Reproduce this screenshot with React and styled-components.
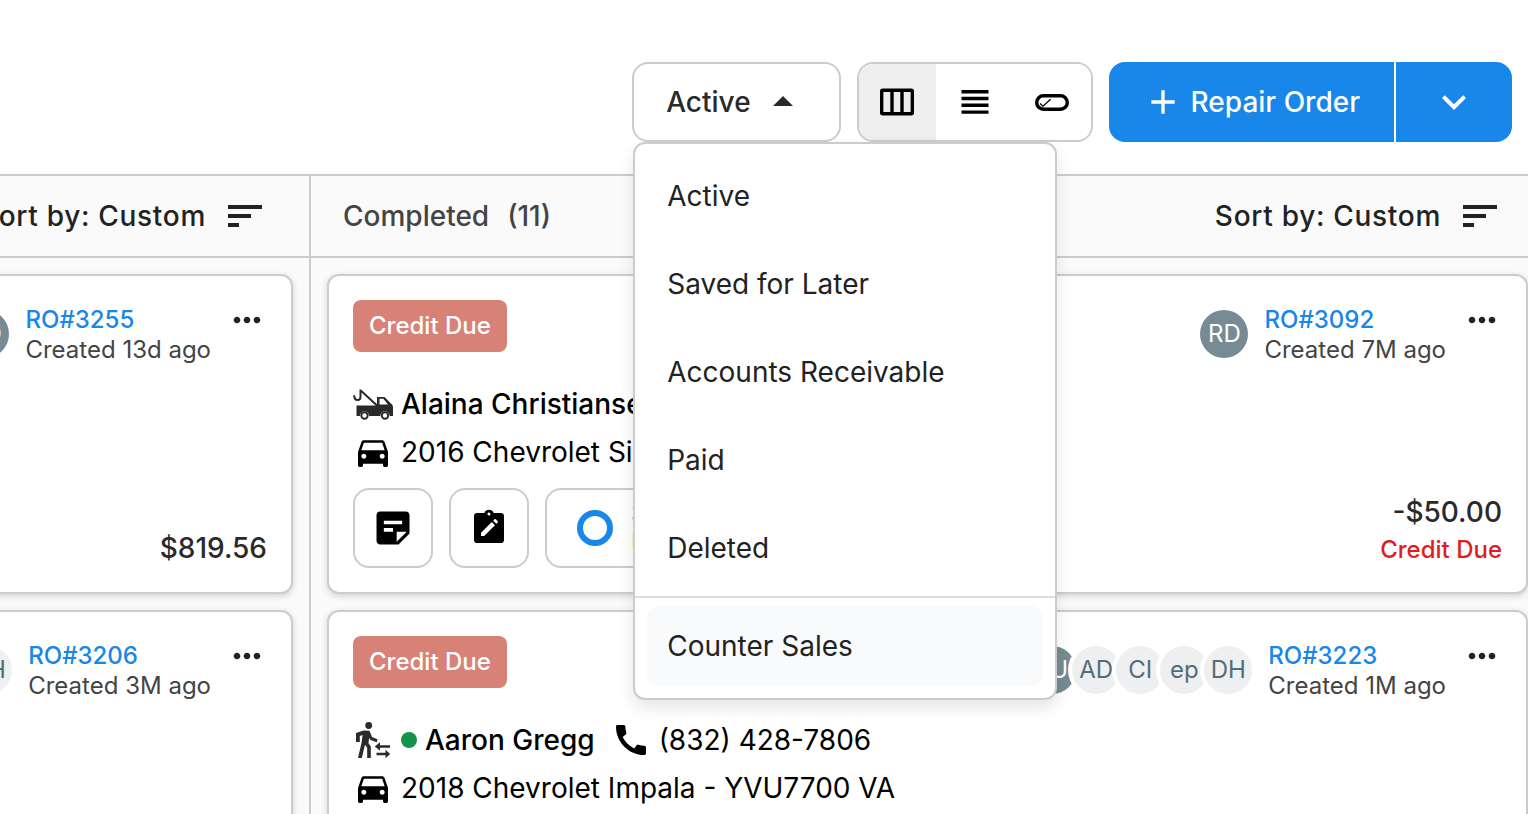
import React from 'react';
import styled, { createGlobalStyle, css } from 'styled-components';
import { MdAdd, MdArrowDropUp, MdCall, MdDirectionsCar, MdKeyboardArrowDown, MdMoreHoriz, MdStickyNote2 } from 'react-icons/md';

const line = '#cccccc';
const blue = '#1986e9';

const GlobalStyle = createGlobalStyle`
  *, *::before, *::after { box-sizing: border-box; }
  body {
    margin: 0;
    background: #fff;
    color: #000;
    font-family: Inter, "Liberation Sans", sans-serif;
    font-size: 28px;
    line-height: 40px;
    -webkit-font-smoothing: antialiased;
  }
  button { font: inherit; color: inherit; cursor: pointer; padding: 0; margin: 0; }
  svg { display: block; flex: none; }
`;

const Page = styled.div`
  display: flex;
  flex-direction: column;
  height: 100vh;
  overflow: hidden;
`;

const Toolbar = styled.header`
  display: flex;
  justify-content: flex-end;
  gap: 16px;
  padding: 62px 16px 32px;
`;

const FilterWrap = styled.div`
  position: relative;
`;

const FilterButton = styled.button`
  display: flex;
  align-items: center;
  gap: 8px;
  height: 80px;
  padding: 0 32px;
  background: #fff;
  border: 2px solid ${line};
  border-radius: 16px;
  color: #2a2a2a;
  font-weight: 500;
`;

const Menu = styled.div`
  position: absolute;
  z-index: 10;
  top: 100%;
  left: 1px;
  width: 424px;
  padding: 12px 0;
  background: #fff;
  border: 2px solid ${line};
  border-radius: 12px;
  box-shadow: 0 8px 16px rgba(0, 0, 0, 0.1);
`;

const MenuGroup = styled.div`
  display: flex;
  flex-direction: column;
  gap: 8px;
  padding: 0 12px;

  & + & {
    margin-top: 8px;
    padding-top: 8px;
    border-top: 2px solid #dddddd;
  }
`;

const MenuItem = styled.button`
  height: 80px;
  padding: 0 20px;
  text-align: left;
  border: 0;
  border-radius: 12px;
  background: ${({ $active }) => ($active ? '#f9fafc' : 'transparent')};
  color: #222222;
`;

const ViewToggle = styled.div`
  display: flex;
  width: 236px;
  height: 80px;
  overflow: hidden;
  border: 2px solid ${line};
  border-radius: 16px;
`;

const ViewButton = styled.button`
  flex: 1;
  display: flex;
  align-items: center;
  justify-content: center;
  border: 0;
  background: ${({ $selected }) => ($selected ? '#eeeeee' : '#fff')};
`;

const SplitButton = styled.div`
  display: flex;
  gap: 2px;
  height: 80px;
  overflow: hidden;
  border-radius: 16px;
`;

const PrimaryButton = styled.button`
  display: flex;
  align-items: center;
  gap: 8px;
  padding: 0 34px;
  border: 0;
  background: ${blue};
  color: #fff;
  font-weight: 500;
`;

const Board = styled.main`
  flex: 1;
  display: flex;
  min-height: 0;
  margin-right: -16px;
  border-top: 2px solid ${line};
  background: #fafafa;
`;

const Column = styled.section`
  display: flex;
  flex-direction: column;
  min-width: 0;
  ${({ $partial }) =>
    $partial
      ? css`
          flex: 0 0 311px;
          align-items: flex-end;
          border-right: 2px solid ${line};
          overflow: hidden;
        `
      : css`
          flex: 1;
          align-items: stretch;
        `}

  & > * { min-width: 640px; }
`;

const ColumnHeader = styled.div`
  display: flex;
  align-items: center;
  justify-content: space-between;
  height: 82px;
  flex: none;
  padding: 0 47px 0 32px;
  border-bottom: 2px solid ${line};
`;

const ColumnTitle = styled.h2`
  margin: 0;
  display: flex;
  gap: 18px;
  font-size: 28px;
  font-weight: 500;
  color: #444444;
`;

const SortButton = styled.button`
  display: flex;
  align-items: center;
  gap: 22px;
  border: 0;
  background: none;
  color: #222222;
  font-weight: 500;
  letter-spacing: 0.025em;
  white-space: nowrap;
`;

const CardList = styled.div`
  display: flex;
  flex-direction: column;
  gap: 16px;
  padding: 16px;
`;

const Card = styled.article`
  display: flex;
  justify-content: space-between;
  flex: none;
  height: 320px;
  padding: 24px;
  background: #fff;
  border: 2px solid ${line};
  border-radius: 12px;
  box-shadow: 0 2px 6px rgba(0, 0, 0, 0.16);
`;

const CardMain = styled.div`
  display: flex;
  flex-direction: column;
  align-items: flex-start;
`;

const CardSide = styled.div`
  display: flex;
  flex-direction: column;
  justify-content: space-between;
  align-items: flex-end;
`;

const Badge = styled.span`
  height: 52px;
  margin-bottom: 28px;
  padding: 0 16px;
  border-radius: 8px;
  background: #d88277;
  color: #fff;
  font-size: 24px;
  font-weight: 500;
  line-height: 52px;
`;

const InfoRow = styled.div`
  display: flex;
  align-items: center;
  gap: 8px;
  height: 48px;
  white-space: nowrap;
`;

const Customer = styled.span`
  font-weight: 500;
`;

const Phone = styled.span`
  display: flex;
  align-items: center;
  gap: 8px;
  margin-left: 8px;
`;

const StatusDot = styled.span`
  width: 16px;
  height: 16px;
  border-radius: 50%;
  background: #16934a;
`;

const Actions = styled.div`
  display: flex;
  gap: 16px;
  margin-top: 12px;
`;

const ActionButton = styled.button`
  display: flex;
  align-items: center;
  justify-content: center;
  gap: 18px;
  height: 80px;
  min-width: 80px;
  padding: ${({ $wide }) => ($wide ? '0 30px' : '0')};
  border: 2px solid ${line};
  border-radius: 16px;
  background: #fff;
`;

const Ring = styled.span`
  width: 36px;
  height: 36px;
  border: 6px solid ${blue};
  border-radius: 50%;
`;

const Progress = styled.span`
  display: flex;
  flex-direction: column;
  font-size: 24px;
  line-height: 28px;
  text-align: left;
  color: #444444;
`;

const OrderHead = styled.div`
  display: flex;
  align-items: flex-start;
  gap: 16px;
`;

const Avatars = styled.div`
  display: flex;
  padding-top: 10px;
`;

const Avatar = styled.span`
  width: 48px;
  height: 48px;
  border-radius: 50%;
  box-shadow: 0 0 0 4px #fff;
  background: ${({ $dark }) => ($dark ? '#768b93' : '#eeeff1')};
  color: ${({ $dark }) => ($dark ? '#fff' : '#536d78')};
  font-size: 24px;
  line-height: 48px;
  text-align: center;

  & + & { margin-left: -4px; }
`;

const OrderText = styled.div`
  display: flex;
  flex-direction: column;
  padding-top: 5px;
  font-size: 24px;
  line-height: 30px;
  white-space: nowrap;
  color: #444444;
`;

const OrderLink = styled.a`
  color: ${blue};
  font-weight: 500;
  text-decoration: none;
`;

const IconButton = styled.button`
  display: flex;
  border: 0;
  background: none;
  color: #222222;
`;

const Amount = styled.div`
  text-align: right;
  font-weight: 500;
  color: #2a2a2a;
`;

const AmountNote = styled.div`
  font-size: 24px;
  line-height: 36px;
  color: #e01e1e;
`;

const SortIcon = () => (
  <svg width="34" height="22" viewBox="0 0 34 22" fill="currentColor" aria-hidden="true">
    <path d="M0 0h34v4H0zM0 9h23v4H0zM0 18h11v4H0z" />
  </svg>
);

const ColumnsIcon = () => (
  <svg width="34" height="28" viewBox="0 0 34 28" fill="none" stroke="#000" strokeWidth="3.4" aria-hidden="true">
    <rect x="1.7" y="2.2" width="30.6" height="23.6" rx="1" />
    <path d="M12 1v26M22 1v26" />
  </svg>
);

const RowsIcon = () => (
  <svg width="28" height="24" viewBox="0 0 28 24" fill="#000" aria-hidden="true">
    <path d="M.5 0h27v3.4H.5zM.5 6.800h27v3.400H.5zM.5 13.600h27V17H.5zM.5 20.400h27v3.400H.5z" />
  </svg>
);

const PillIcon = () => (
  <svg width="34" height="17" viewBox="0 0 34 17" fill="none" stroke="#000" aria-hidden="true">
    <rect x="1.7" y="1.7" width="30.6" height="13.6" rx="6.8" strokeWidth="3.4" />
    <path d="M5 9.4l3 2.8 7.6-7" strokeWidth="1.3" />
  </svg>
);

const ClipboardIcon = () => (
  <svg width="40" height="40" viewBox="0 0 24 24" aria-hidden="true">
    <path d="M19 3h-4.2a3 3 0 0 0-5.6 0H5a2 2 0 0 0-2 2v14a2 2 0 0 0 2 2h14a2 2 0 0 0 2-2V5a2 2 0 0 0-2-2zm-7-.3a.9.9 0 1 1 0 1.8.9.9 0 0 1 0-1.800z" />
    <path fill="#fff" d="M7.200 14.900l6.500-6.500 1.900 1.900-6.500 6.500H7.200zM14.500 7.600l.8-.8q.4-.4.8 0l1.100 1.100q.4.4 0 .8l-.8.800z" />
  </svg>
);

const TowTruckIcon = () => (
  <svg width="40" height="40" viewBox="0 0 40 40" fill="#2a2a2a" aria-hidden="true">
    <path d="M3.500 21.500h20.500V13h7.500l7.500 7.500 1 2v9.500H36.700a4.700 4.700 0 0 0-9.400 0H16.200a4.700 4.700 0 0 0-9.400 0H3.500zM26.500 14.800v5.700h8.500l-4.700-5.700z" fillRule="evenodd" />
    <path d="M7.500 5.500v7.500a3 3 0 0 1-6 0L.8 11.500M7.500 6.200l16.500 15.300" fill="none" stroke="#2a2a2a" strokeWidth="2" />
    <circle cx="11.500" cy="31.500" r="3.200" fill="none" stroke="#2a2a2a" strokeWidth="2" />
    <circle cx="32" cy="31.500" r="3.200" fill="none" stroke="#2a2a2a" strokeWidth="2" />
  </svg>
);

const WalkIcon = () => (
  <svg width="40" height="40" viewBox="0 0 40 40" fill="#2a2a2a" aria-hidden="true">
    <circle cx="15.700" cy="5.500" r="3.400" />
    <path d="M10.500 10.500l6 .2 2.500 6.300 5.500 2.300-.8 3-6.200-2.300-1.300-2-.8 5 2.400 3.500V38h-3.600V27.800L12 24.800 8.800 38H5l3.600-15.500 1-7.500-2.800 1v6H3v-9z" />
    <path d="M26 25.300h11v2.400H26zM23.500 32.800h10v2.400h-10z" />
    <path d="M27 22.300v8.400L21.800 26.500zM32.500 29.800v8.400l4.700-4.200z" />
  </svg>
);

function Order({ number, created, avatars, children }) {
  return (
    <CardSide>
      <OrderHead>
        <Avatars>
          {avatars.map(([initials, dark]) => (
            <Avatar key={initials} $dark={dark}>{initials}</Avatar>
          ))}
        </Avatars>
        <OrderText>
          <OrderLink href="#order">{number}</OrderLink>
          <span>Created {created} ago</span>
        </OrderText>
        <IconButton aria-label="More options"><MdMoreHoriz size={40} /></IconButton>
      </OrderHead>
      {children}
    </CardSide>
  );
}

const Sort = () => (
  <SortButton>Sort by: Custom<SortIcon /></SortButton>
);

export default function App() {
  return (
    <Page>
      <GlobalStyle />
      <Toolbar>
        <FilterWrap>
          <FilterButton aria-haspopup="menu" aria-expanded="true">
            Active
            <MdArrowDropUp size={48} />
          </FilterButton>
          <Menu role="menu">
            <MenuGroup>
              {['Active', 'Saved for Later', 'Accounts Receivable', 'Paid', 'Deleted'].map((label) => (
                <MenuItem key={label} role="menuitem">{label}</MenuItem>
              ))}
            </MenuGroup>
            <MenuGroup>
              <MenuItem role="menuitem" $active>Counter Sales</MenuItem>
            </MenuGroup>
          </Menu>
        </FilterWrap>
        <ViewToggle role="group" aria-label="View">
          <ViewButton $selected aria-label="Columns"><ColumnsIcon /></ViewButton>
          <ViewButton aria-label="List"><RowsIcon /></ViewButton>
          <ViewButton aria-label="Status"><PillIcon /></ViewButton>
        </ViewToggle>
        <SplitButton>
          <PrimaryButton><MdAdd size={40} />Repair Order</PrimaryButton>
          <PrimaryButton aria-label="More create options"><MdKeyboardArrowDown size={48} /></PrimaryButton>
        </SplitButton>
      </Toolbar>

      <Board>
        <Column $partial>
          <ColumnHeader><span /><Sort /></ColumnHeader>
          <CardList>
            <Card>
              <CardMain />
              <Order number="RO#3255" created="13d" avatars={[['RD', true]]}>
                <Amount>$819.56</Amount>
              </Order>
            </Card>
            <Card>
              <CardMain />
              <Order number="RO#3206" created="3M" avatars={[['DH', false]]} />
            </Card>
          </CardList>
        </Column>

        <Column>
          <ColumnHeader>
            <ColumnTitle><span>Completed</span><span>(11)</span></ColumnTitle>
            <Sort />
          </ColumnHeader>
          <CardList>
            <Card>
              <CardMain>
                <Badge>Credit Due</Badge>
                <InfoRow><TowTruckIcon /><Customer>Alaina Christiansen</Customer></InfoRow>
                <InfoRow><MdDirectionsCar size={40} />2016 Chevrolet Silverado</InfoRow>
                <Actions>
                  <ActionButton aria-label="Notes"><MdStickyNote2 size={44} /></ActionButton>
                  <ActionButton aria-label="Edit inspection"><ClipboardIcon /></ActionButton>
                  <ActionButton $wide>
                    <Ring />
                    <Progress><span>3</span><span>Hrs</span></Progress>
                  </ActionButton>
                </Actions>
              </CardMain>
              <Order number="RO#3092" created="7M" avatars={[['RD', true]]}>
                <Amount>
                  -$50.00
                  <AmountNote>Credit Due</AmountNote>
                </Amount>
              </Order>
            </Card>
            <Card>
              <CardMain>
                <Badge>Credit Due</Badge>
                <InfoRow>
                  <WalkIcon />
                  <StatusDot />
                  <Customer>Aaron Gregg</Customer>
                  <Phone><MdCall size={40} />(832) 428-7806</Phone>
                </InfoRow>
                <InfoRow><MdDirectionsCar size={40} />2018 Chevrolet Impala - YVU7700 VA</InfoRow>
              </CardMain>
              <Order
                number="RO#3223"
                created="1M"
                avatars={[['JU', true], ['AD', false], ['CI', false], ['ep', false], ['DH', false]]}
              />
            </Card>
          </CardList>
        </Column>
      </Board>
    </Page>
  );
}
